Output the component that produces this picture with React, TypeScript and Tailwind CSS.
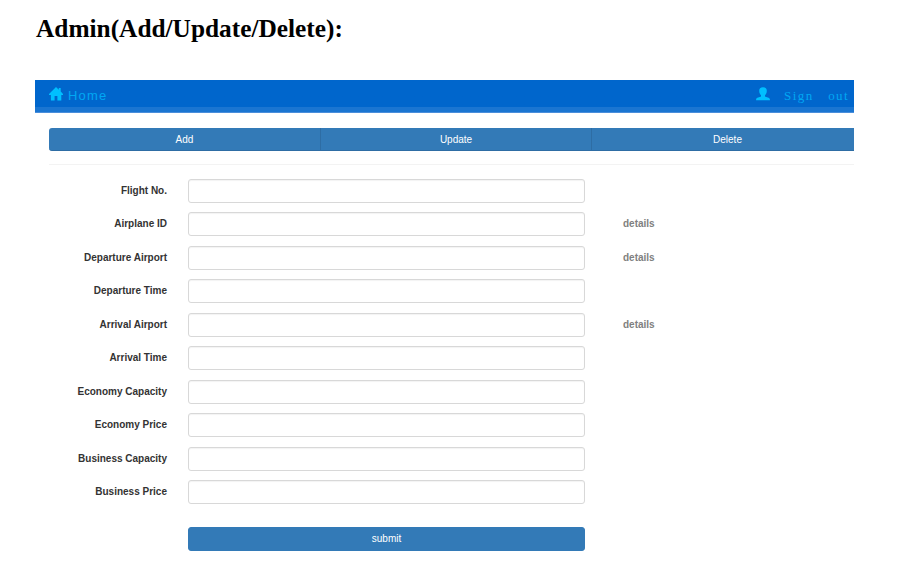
const fields = [
  { label: 'Flight No.' },
  { label: 'Airplane ID', details: true },
  { label: 'Departure Airport', details: true },
  { label: 'Departure Time' },
  { label: 'Arrival Airport', details: true },
  { label: 'Arrival Time' },
  { label: 'Economy Capacity' },
  { label: 'Economy Price' },
  { label: 'Business Capacity' },
  { label: 'Business Price' },
];

function HomeIcon() {
  return (
    <svg className="mt-[7px] h-[14px] w-[14px] shrink-0" viewBox="0 0 14 14" fill="#00bfff">
      <path d="M7 0 L9.8 2.7 V1 H11.7 V4.6 L14 7 V8 H12.3 V13.5 H8.4 V9 H5.6 V13.5 H1.9 V8 H0 V7 Z" />
    </svg>
  );
}

function UserIcon() {
  return (
    <svg className="mt-[7px] h-[14px] w-[14px] shrink-0" viewBox="0 0 14 14" fill="#00bfff">
      <path d="M7 0.3 C9.7 0.3 10.9 1.8 10.8 4 C10.7 6 9.9 7.4 9 8.3 V9.5 C10 10.2 13.9 10.6 13.9 12.3 V13.2 H0.1 V12.3 C0.1 10.6 4 10.2 5 9.5 V8.3 C4.1 7.4 3.3 6 3.2 4 C3.1 1.8 4.3 0.3 7 0.3 Z" />
    </svg>
  );
}

export default function App() {
  return (
    <div className="h-[588px] w-[916px] overflow-hidden bg-white pl-[35px] font-['Liberation_Sans',Arial,sans-serif] text-[10px] text-[#333]">
      <h1 className="h-[80px] pt-[12px] pl-px font-['Liberation_Serif',serif] text-[25.35px] leading-[32px] font-bold whitespace-nowrap text-black">
        Admin(Add/Update/Delete):
      </h1>
      <div className="w-[819px]">
        <nav className="flex h-[33px] justify-between border-b border-[#4a8edb] bg-linear-to-b from-[#0066cc] from-[27px] to-[#1a75d1] to-[27px] pr-[5px] pl-[14px] text-[#00a8f3]">
          <a className="flex">
            <HomeIcon />
            <span className="pt-[8px] pl-[5px] text-[13px] leading-[16px] tracking-[1.2px]">Home</span>
          </a>
          <a className="flex">
            <UserIcon />
            <span className="pt-[8px] pl-[14px] font-['Liberation_Serif',serif] text-[13px] leading-[16px] tracking-[1.4px] [word-spacing:10px]">Sign out</span>
          </a>
        </nav>
        <div className="ml-[14px] overflow-hidden pt-[15px]">
          <div className="flex h-[23px] w-[814px] overflow-hidden rounded-[3px] border-b border-[#2e6da4] bg-[#337ab7] text-center leading-[23px] text-white">
            <button className="w-[272px] border-r border-[#2e6da4]">Add</button>
            <button className="w-[271px] border-r border-[#2e6da4]">Update</button>
            <button className="w-[271px]">Delete</button>
          </div>
          <hr className="mt-[13px] border-[#f3f3f3]" />
        </div>
        <form className="pt-[14px]">
          {fields.map((f) => (
            <div key={f.label} className="flex h-[33.48px]">
              <label className="w-[132px] pt-[4px] text-right leading-[16px] font-bold whitespace-nowrap">{f.label}</label>
              <input className="ml-[21px] h-[24px] w-[397px] rounded-[3px] border border-[#d8d8d8] bg-white px-2 shadow-[inset_0_1px_1px_rgba(0,0,0,0.05)]" />
              {f.details && <a className="ml-[38px] pt-[4px] leading-[16px] font-bold text-[#808080]">details</a>}
            </div>
          ))}
          <button type="button" className="mt-[13px] ml-[153px] block h-[24px] w-[397px] rounded-[3px] border border-[#337ab7] bg-[#337ab7] text-center leading-[22px] text-white">
            submit
          </button>
        </form>
      </div>
    </div>
  );
}
